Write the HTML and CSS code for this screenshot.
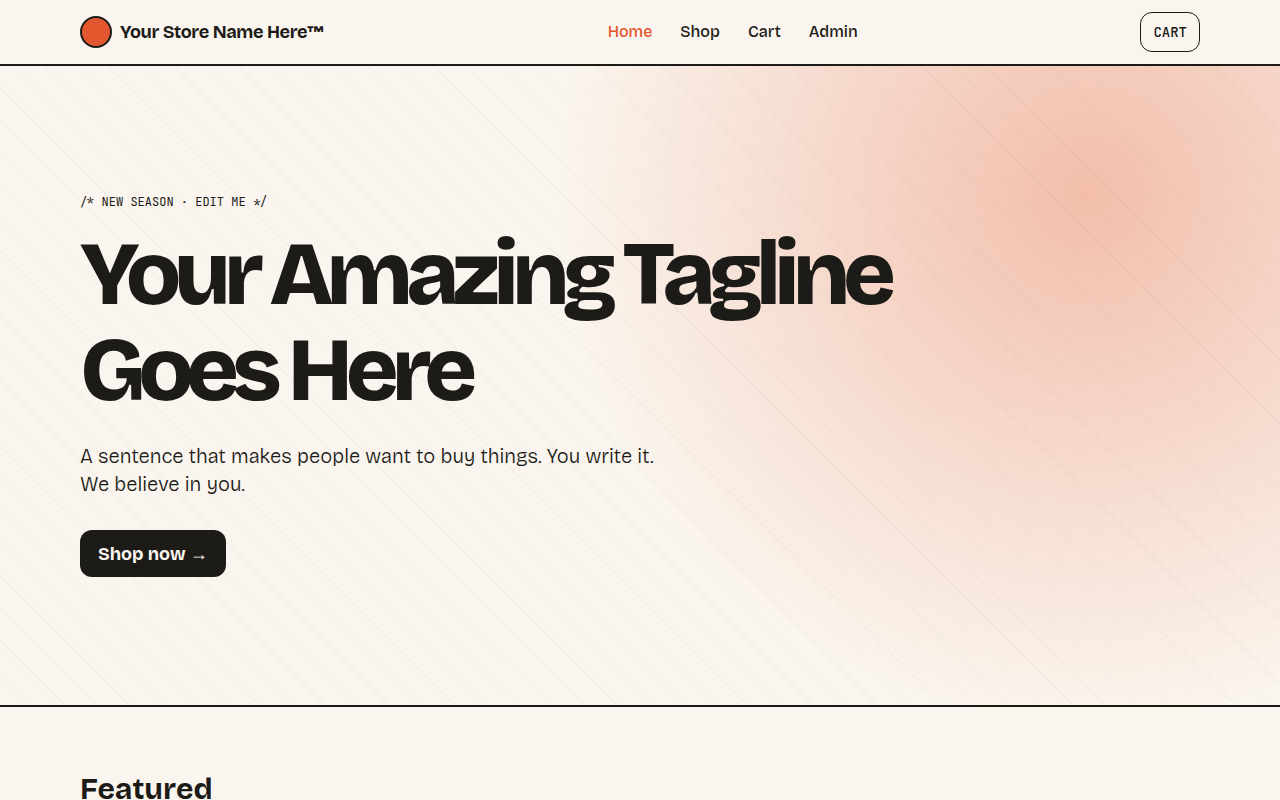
FILE: index.html
```html
<!DOCTYPE html>
<html lang="en">
<head>
    <meta charset="UTF-8">
    <meta name="viewport" content="width=device-width, initial-scale=1.0">
    <title>Your Store Name Here™</title>
    <link rel="stylesheet" href="styles.css">
</head>
<body>
    <header class="site-header">
        <div class="container header-inner">
            <a href="#" class="brand">
                <span class="brand-mark"></span>
                <span>Your Store Name Here™</span>
            </a>
            <nav class="nav">
                <a href="#" class="active">Home</a>
                <a href="#">Shop</a>
                <a href="#">Cart</a>
                <a href="#">Admin</a>
            </nav>
            <button type="button" class="cart-btn">CART</button>
        </div>
    </header>

    <main>
        <section class="hero">
            <div class="container">
                <p class="eyebrow">/* NEW SEASON · EDIT ME */</p>
                <h1>Your Amazing Tagline Goes Here</h1>
                <p class="lead">A sentence that makes people want to buy things. You write it. We believe in you.</p>
                <a href="#" class="btn">Shop now <span class="arrow">→</span></a>
            </div>
        </section>

        <section class="featured">
            <div class="container">
                <h2>Featured</h2>
            </div>
        </section>
    </main>
</body>
</html>
```

FILE: styles.css
```css
:root {
    --ink: #1c1b17;
    --paper: #faf5ee;
    --accent: #e4572e;
}
* {
    box-sizing: border-box;
}
body {
    margin: 0;
    font-family: "Bricolage Grotesque", Inter, sans-serif;
    font-size: 16px;
    line-height: 24px;
    color: var(--ink);
    background-color: var(--paper);
}
h1, h2, p {
    margin: 0;
}
a {
    color: inherit;
    text-decoration: none;
}
.container {
    max-width: 1200px;
    margin: 0 auto;
    padding: 0 40px;
}

/* Header */
.site-header {
    border-bottom: 2px solid var(--ink);
}
.header-inner {
    display: flex;
    align-items: center;
    justify-content: space-between;
    height: 64px;
}
.brand {
    display: flex;
    align-items: center;
    gap: 8px;
    font-size: 18px;
    font-weight: 700;
    letter-spacing: -0.02em;
}
.brand-mark {
    width: 32px;
    height: 32px;
    border: 2px solid var(--ink);
    border-radius: 50%;
    background-color: var(--accent);
}
.nav {
    display: flex;
    gap: 28px;
    font-weight: 500;
}
.nav .active {
    color: var(--accent);
}
.cart-btn {
    height: 40px;
    padding: 0 12px;
    font-family: "JetBrains Mono", "Liberation Mono", monospace;
    font-size: 14px;
    font-weight: 500;
    color: var(--ink);
    background: transparent;
    border: 1px solid var(--ink);
    border-radius: 12px;
    cursor: pointer;
}

/* Hero */
.hero {
    padding: 128px 0;
    border-bottom: 2px solid var(--ink);
    background-image:
        repeating-linear-gradient(45deg, transparent 0 22px, rgba(28, 27, 23, 0.03) 22px 23px),
        radial-gradient(circle at 85% 20%, rgba(228, 87, 46, 0.35), rgba(228, 87, 46, 0) 530px);
}
.eyebrow {
    margin-bottom: 16px;
    font-family: "JetBrains Mono", "Liberation Mono", monospace;
    font-size: 12px;
    line-height: 16px;
}
h1 {
    max-width: 900px;
    margin-bottom: 24px;
    font-size: 90px;
    font-weight: 800;
    line-height: 96px;
    letter-spacing: -0.08em;
}
.lead {
    max-width: 600px;
    margin-bottom: 32px;
    font-size: 20px;
    font-weight: 300;
    line-height: 28px;
}
.btn {
    display: block;
    width: fit-content;
    padding: 12px 18px 11px;
    font-size: 18px;
    font-weight: 700;
    color: var(--paper);
    background-color: var(--ink);
    border-radius: 12px;
}
.arrow {
    font-family: "Liberation Serif", serif;
    font-weight: 400;
}

/* Featured */
.featured {
    padding: 64px 0;
}
h2 {
    font-size: 30px;
    font-weight: 700;
    line-height: 36px;
}
```
